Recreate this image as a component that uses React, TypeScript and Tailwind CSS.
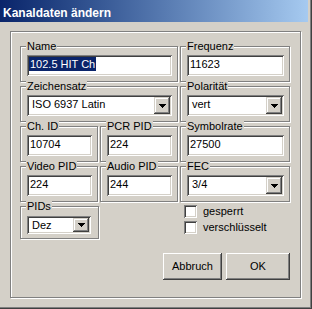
import type { ReactNode } from 'react'

// classic 3D edges, drawn with inset shadows
const SUNKEN =
  'bg-white shadow-[inset_1px_1px_0_#808080,inset_-1px_-1px_0_#fff,inset_2px_2px_0_#404040,inset_-2px_-2px_0_#d4d0c8]'
const RAISED =
  'bg-[#d4d0c8] shadow-[inset_-1px_-1px_0_#404040,inset_1px_1px_0_#fff,inset_-2px_-2px_0_#808080]'
const ARROW_BTN =
  'bg-[#d4d0c8] shadow-[inset_-1px_-1px_0_#404040,inset_1px_1px_0_#d4d0c8,inset_-2px_-2px_0_#808080,inset_2px_2px_0_#fff]'

export default function App() {
  return (
    <div className="h-[309px] w-[312px] overflow-hidden bg-[#d4d0c8] font-['Liberation_Sans',Arial,sans-serif] text-[11px] leading-[13px] text-black shadow-[inset_-1px_-1px_0_#404040,inset_-2px_-2px_0_#808080]">
      <div className="mr-[4px] h-[22px] bg-linear-to-r from-[#0a246a] to-[#a6caf0] pl-[3px] pt-[6px] text-[12px] font-bold leading-[14px] text-white">
        Kanaldaten ändern
      </div>

      <div className="ml-[10px] mt-[9px] h-[267px] w-[291px] border border-[#808080] pb-[17px] pl-[9px] pr-[10px] pt-[14px] shadow-[inset_1px_1px_0_#fff,1px_1px_0_#fff]">
        <div className="flex flex-col gap-[4px]">
          <div className="flex gap-[2px]">
            <GroupBox label="Name" className="w-[158px]">
              <Edit value="102.5 HIT Ch" selected />
            </GroupBox>
            <GroupBox label="Frequenz" className="w-[110px]">
              <Edit value="11623" />
            </GroupBox>
          </div>
          <div className="flex gap-[2px]">
            <GroupBox label="Zeichensatz" className="w-[158px]">
              <Combo value="ISO 6937 Latin" />
            </GroupBox>
            <GroupBox label="Polarität" className="w-[110px]">
              <Combo value="vert" />
            </GroupBox>
          </div>
          <div className="flex gap-[2px]">
            <GroupBox label="Ch. ID" className="w-[78px]">
              <Edit value="10704" />
            </GroupBox>
            <GroupBox label="PCR PID" className="w-[78px]">
              <Edit value="224" />
            </GroupBox>
            <GroupBox label="Symbolrate" className="w-[110px]">
              <Edit value="27500" />
            </GroupBox>
          </div>
          <div className="flex gap-[2px]">
            <GroupBox label="Video PID" className="w-[78px]">
              <Edit value="224" />
            </GroupBox>
            <GroupBox label="Audio PID" className="w-[78px]">
              <Edit value="244" />
            </GroupBox>
            <GroupBox label="FEC" className="w-[110px]">
              <Combo value="3/4" />
            </GroupBox>
          </div>
        </div>

        <div className="mt-[3px] flex h-[34px]">
          <GroupBox label="PIDs" className="mt-[1px] h-[33px]! w-[79px] pt-[9px]!">
            <Combo value="Dez" className="h-[18px] w-[64px]" />
          </GroupBox>
          <div className="ml-[85px] flex flex-col gap-[3px]">
            <CheckBox label="gesperrt" />
            <CheckBox label="verschlüsselt" />
          </div>
        </div>

        <div className="mt-[14px] flex justify-end gap-[4px]">
          <Button label="Abbruch" className="w-[59px]" />
          <Button label="OK" className="w-[64px]" />
        </div>
      </div>
    </div>
  )
}

function GroupBox({
  label,
  className = '',
  children,
}: {
  label: string
  className?: string
  children: ReactNode
}) {
  return (
    <div
      className={`relative h-[36px] border border-[#808080] pl-[6px] pr-[5px] pt-[8px] shadow-[inset_1px_1px_0_#fff,1px_1px_0_#fff] ${className}`}
    >
      <span className="absolute left-[5px] top-[-7px] bg-[#d4d0c8] px-[1px] leading-[13px]">
        {label}
      </span>
      {children}
    </div>
  )
}

function Edit({ value, selected = false }: { value: string; selected?: boolean }) {
  return (
    <div className={`h-[21px] w-full p-[2px] leading-[14px] ${SUNKEN}`}>
      {selected ? (
        <span className="inline-block bg-[#0a246a] px-[1px] text-white">{value}</span>
      ) : (
        <span className="pl-[1px]">{value}</span>
      )}
    </div>
  )
}

function Combo({ value, className = 'h-[21px] w-full' }: { value: string; className?: string }) {
  return (
    <div className={`flex p-[2px] ${SUNKEN} ${className}`}>
      <span className="flex-1 truncate pl-[3px] leading-[14px]">{value}</span>
      <div className={`flex w-[16px] items-center justify-center ${ARROW_BTN}`}>
        <svg width="7" height="4" viewBox="0 0 7 4" shapeRendering="crispEdges">
          <path d="M0 0h7v1h-1v1h-1v1h-1v1h-1v-1h-1v-1h-1v-1h-1z" fill="#000" />
        </svg>
      </div>
    </div>
  )
}

function CheckBox({ label }: { label: string }) {
  return (
    <div className="flex h-[13px] items-center gap-[6px]">
      <div className={`size-[13px] ${SUNKEN}`} />
      <span>{label}</span>
    </div>
  )
}

function Button({ label, className }: { label: string; className: string }) {
  return (
    <div className={`flex h-[27px] items-center justify-center ${RAISED} ${className}`}>
      {label}
    </div>
  )
}
